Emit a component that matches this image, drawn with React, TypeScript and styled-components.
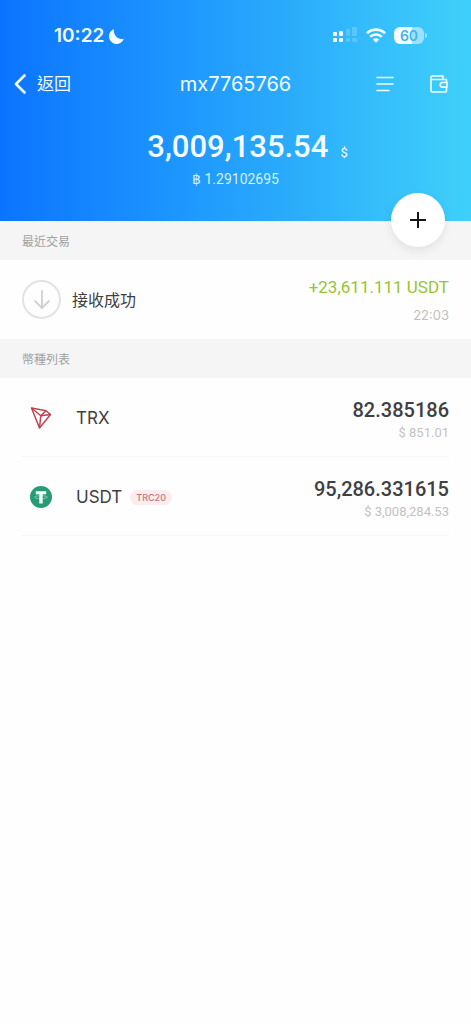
import React from "react";
import styled, { createGlobalStyle } from "styled-components";

const ui = `Inter, "Noto Sans CJK TC", sans-serif`;
const figures = `Roboto, "Noto Sans CJK TC", sans-serif`;

const GlobalStyle = createGlobalStyle`
  *, *::before, *::after { box-sizing: border-box; }
  body { margin: 0; background: #fefefe; font-family: ${ui}; color: #3f4041; }
  button { border: 0; padding: 0; background: none; color: inherit; font: inherit; cursor: pointer; }
  h1, h2, p, ul { margin: 0; padding: 0; font-weight: 400; }
  svg { display: block; }
`;

const Page = styled.main`
  min-height: 100vh;
`;

const Header = styled.header`
  position: relative;
  height: 221px;
  color: #f4fdff;
  background: linear-gradient(90deg, #0b74ff 0%, #1688ff 22%, #1f9aff 42%, #2bacfb 62%, #36c0fb 82%, #3fd0fa 100%);
`;

const StatusBar = styled.div`
  display: flex;
  align-items: center;
  justify-content: space-between;
  height: 56px;
  padding: 14px 44px 0 54px;
`;

const Clock = styled.div`
  display: flex;
  align-items: center;
  gap: 4px;
  padding-top: 2px;
  font-size: 19px;
  font-weight: 600;
  line-height: 24px;
`;

const StatusIcons = styled.div`
  display: flex;
  align-items: center;
  gap: 8px;
`;

const NavBar = styled.nav`
  display: grid;
  grid-template-columns: 1fr auto 1fr;
  align-items: center;
  height: 56px;
  padding: 0 14px;
`;

const BackButton = styled.button`
  display: flex;
  align-items: center;
  justify-self: start;
  gap: 11px;
  font-size: 17px;
  line-height: 24px;
`;

const Title = styled.h1`
  font-size: 20px;
  line-height: 24px;
`;

const NavActions = styled.div`
  display: flex;
  justify-self: end;
  gap: 35px;
  padding-right: 8px;
`;

const Balance = styled.p`
  display: flex;
  align-items: baseline;
  justify-content: center;
  gap: 12px;
  padding: 15px 0 0 24px;
  font-family: ${figures};
  font-size: 31px;
  font-weight: 500;
  line-height: 40px;
`;

const Unit = styled.span`
  font-size: 13px;
  font-weight: 400;
`;

const BtcBalance = styled.p`
  margin-top: -4px;
  font-family: ${figures};
  font-size: 14px;
  line-height: 20px;
  text-align: center;
  color: #d3f2ff;
`;

const AddButton = styled.button`
  position: absolute;
  right: 26px;
  bottom: -26px;
  display: grid;
  place-items: center;
  width: 54px;
  height: 54px;
  border-radius: 50%;
  background: #fff;
  box-shadow: 0 4px 10px rgba(0, 0, 0, 0.08);
`;

const SectionTitle = styled.h2`
  height: 39px;
  padding-left: 22px;
  font-size: 12px;
  line-height: 41px;
  color: #a0a1a1;
  background: #f5f5f5;
`;

const Transaction = styled.div`
  display: flex;
  align-items: center;
  height: 79px;
  padding: 0 22px;
`;

const ArrowBadge = styled.span`
  display: grid;
  place-items: center;
  width: 39px;
  height: 39px;
  margin-right: 11px;
  border: 2px solid #e1e2e2;
  border-radius: 50%;
`;

const TransactionName = styled.span`
  font-size: 16px;
  line-height: 24px;
`;

const Amounts = styled.div`
  display: flex;
  flex-direction: column;
  align-items: flex-end;
  margin-left: auto;
  font-family: ${figures};
`;

const Received = styled.span`
  font-size: 17px;
  line-height: 24px;
  color: #96c530;
`;

const Time = styled.time`
  padding-top: 6px;
  font-family: ${ui};
  font-size: 13px;
  line-height: 20px;
  color: #c0c0c0;
`;

const CoinList = styled.ul`
  list-style: none;
  padding: 0 22px;
`;

const CoinRow = styled.li`
  display: flex;
  align-items: center;
  height: 79px;
  padding-top: 2px;
  border-bottom: 1px solid #f7f7f7;
`;

const CoinIcon = styled.span`
  display: grid;
  place-items: center;
  width: 38px;
  margin-right: 16px;
`;

const CoinName = styled.span`
  font-size: 17px;
  line-height: 24px;
`;

const Tag = styled.span`
  margin-left: 8px;
  padding: 0 6px;
  border-radius: 8px;
  font-size: 9px;
  font-weight: 500;
  line-height: 15px;
  color: #c4777b;
  background: #fbeced;
`;

const Holding = styled.span`
  padding-top: 3px;
  font-size: 20px;
  font-weight: 500;
  line-height: 26px;
`;

const Value = styled.span`
  font-size: 13px;
  line-height: 20px;
  color: #c2c2c2;
`;

const Moon = () => (
  <svg width="17" height="17" viewBox="0 0 17 17" fill="currentColor" aria-hidden="true">
    <path d="M6 1.200A7.600 7.600 0 1 0 15.800 10.800 8.200 8.200 0 0 1 6 1.200Z" />
  </svg>
);

const Signal = () => (
  <svg width="25" height="18" viewBox="0 0 25 18" fill="currentColor" aria-label="Signal">
    <rect x="0" y="6" width="4" height="4" rx="1" />
    <rect x="6" y="5" width="4" height="5" rx="1" />
    <rect x="0" y="12" width="4" height="4" rx="1" />
    <rect x="6" y="12" width="4" height="4" rx="1" />
    <g opacity=".2">
      <rect x="13" y="3" width="4" height="7" rx="1" />
      <rect x="19" y="1" width="5" height="9" rx="1" />
      <rect x="13" y="12" width="4" height="4" rx="1" />
      <rect x="19" y="12" width="5" height="4" rx="1" />
    </g>
  </svg>
);

const Wifi = () => (
  <svg width="20" height="15" viewBox="0 0 20 15" fill="none" stroke="currentColor" strokeWidth="2.7" aria-label="Wi-Fi">
    <path d="M1 5.3a13 13 0 0 1 18 0M4.2 8.8a8.400 8.400 0 0 1 11.600 0" />
    <path d="M10 14.800 6.800 11.600a4.600 4.600 0 0 1 6.400 0Z" fill="currentColor" stroke="none" />
  </svg>
);

const Battery = styled.div`
  position: relative;
  width: 30px;
  height: 17px;
  margin-right: 3px;
  border-radius: 6px;
  background: linear-gradient(90deg, #f4fdff 60%, #9ee1fc 60%);
  color: #42b4ee;
  font-size: 14px;
  font-weight: 600;
  line-height: 17px;
  text-align: center;

  &::after {
    content: "";
    position: absolute;
    top: 6px;
    right: -3px;
    width: 2px;
    height: 5px;
    border-radius: 0 2px 2px 0;
    background: #9ee1fc;
  }
`;

const IconButton = styled.button`
  display: grid;
  place-items: center;
`;

const Tron = () => (
  <svg width="22" height="24" viewBox="0 0 22 24" fill="none" stroke="#bd4650" strokeWidth="1.5" strokeLinejoin="round" aria-hidden="true">
    <path d="M1.500 2 16 4.700 20.500 8.500 9.500 22Z" />
    <path d="M1.500 2 10.800 9.800 9.500 22M10.800 9.800 16 4.700M10.800 9.800 20.500 8.500" />
  </svg>
);

const Tether = () => (
  <svg width="22" height="22" viewBox="0 0 22 22" aria-hidden="true">
    <circle cx="11" cy="11" r="11" fill="#279b75" />
    <path d="M5.800 5.200h10.400v3h-3.500v9.200H9.300V8.200H5.800Z" fill="#f4fffb" />
    <ellipse cx="11" cy="11.200" rx="6.400" ry="1.500" fill="none" stroke="#d5f3e8" strokeOpacity=".7" strokeWidth=".7" />
  </svg>
);

const coins = [
  { name: "TRX", icon: <Tron />, amount: "82.385186", value: "$ 851.01" },
  { name: "USDT", tag: "TRC20", icon: <Tether />, amount: "95,286.331615", value: "$ 3,008,284.53" },
];

export default function App() {
  return (
    <>
      <GlobalStyle />
      <Page>
        <Header>
          <StatusBar>
            <Clock>10:22<Moon /></Clock>
            <StatusIcons>
              <Signal />
              <Wifi />
              <Battery>60</Battery>
            </StatusIcons>
          </StatusBar>
          <NavBar>
            <BackButton>
              <svg width="12" height="20" viewBox="0 0 12 20" fill="none" stroke="currentColor" strokeWidth="2.6" strokeLinecap="round" strokeLinejoin="round" aria-hidden="true">
                <path d="M10.500 1.500 2 10l8.500 8.500" />
              </svg>
              返回
            </BackButton>
            <Title>mx7765766</Title>
            <NavActions>
              <IconButton aria-label="Menu">
                <svg width="18" height="18" viewBox="0 0 18 18" fill="none" stroke="currentColor" strokeWidth="1.6" strokeLinecap="round">
                  <path d="M1 2.500h16M1 9h16M1 15.500h12" />
                </svg>
              </IconButton>
              <IconButton aria-label="Wallet">
                <svg width="20" height="18" viewBox="0 0 20 18" fill="none" stroke="currentColor" strokeWidth="1.6" strokeLinejoin="round" strokeLinecap="round">
                  <path d="M17.500 7V4.500H2V2.200Q2 1 3.200 1H14V4.500M2 4V15.800Q2 17 3.200 17H16.300Q17.500 17 17.500 15.800V12.500" />
                  <path d="M18 7.500H13.500a2.300 2.300 0 0 0 0 4.600H18Z" />
                </svg>
              </IconButton>
            </NavActions>
          </NavBar>
          <Balance>3,009,135.54<Unit>$</Unit></Balance>
          <BtcBalance>฿ 1.29102695</BtcBalance>
          <AddButton aria-label="Add">
            <svg width="18" height="18" viewBox="0 0 18 18" stroke="#151515" strokeWidth="2">
              <path d="M9 1v16M1 9h16" />
            </svg>
          </AddButton>
        </Header>

        <SectionTitle>最近交易</SectionTitle>
        <Transaction>
          <ArrowBadge>
            <svg width="18" height="20" viewBox="0 0 18 20" fill="none" stroke="#cfd0d0" strokeWidth="1.8" strokeLinecap="round" strokeLinejoin="round" aria-hidden="true">
              <path d="M9 1v17M2 11l7 7 7-7" />
            </svg>
          </ArrowBadge>
          <TransactionName>接收成功</TransactionName>
          <Amounts>
            <Received>+23,611.111 USDT</Received>
            <Time>22:03</Time>
          </Amounts>
        </Transaction>

        <SectionTitle>幣種列表</SectionTitle>
        <CoinList>
          {coins.map((coin) => (
            <CoinRow key={coin.name}>
              <CoinIcon>{coin.icon}</CoinIcon>
              <CoinName>{coin.name}</CoinName>
              {coin.tag && <Tag>{coin.tag}</Tag>}
              <Amounts>
                <Holding>{coin.amount}</Holding>
                <Value>{coin.value}</Value>
              </Amounts>
            </CoinRow>
          ))}
        </CoinList>
      </Page>
    </>
  );
}
